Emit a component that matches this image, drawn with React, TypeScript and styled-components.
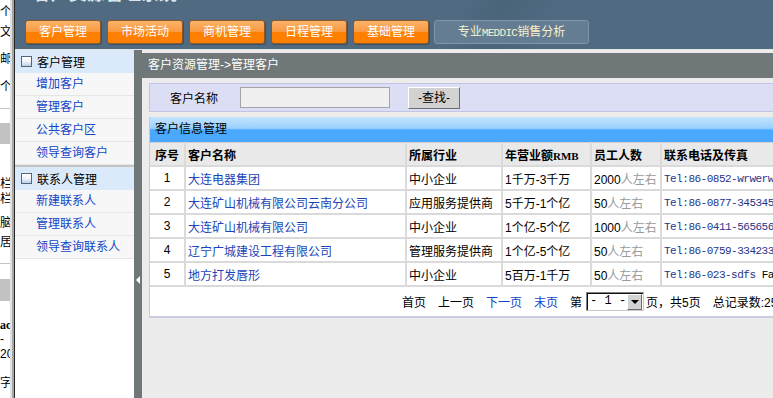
import React from "react";
import styled, { createGlobalStyle } from "styled-components";

const GlobalStyle = createGlobalStyle`
  html, body {
    margin: 0;
    padding: 0;
    background: #ffffff;
  }
  body {
    font-family: "Liberation Sans", "Noto Sans CJK SC", sans-serif;
    font-size: 12px;
    color: #000;
    overflow: hidden;
  }
`;

const Page = styled.div`
  display: flex;
  width: 773px;
  height: 398px;
  overflow: hidden;
`;

/* ---------- cut-off frame on the far left ---------- */

const LeftStrip = styled.div`
  width: 10px;
  flex-shrink: 0;
  display: flex;
  flex-direction: column;
  background: #fff;
  overflow: hidden;
`;

const StripRow = styled.div<{ $h: number; $bold?: boolean }>`
  height: ${(p) => p.$h}px;
  line-height: ${(p) => p.$h}px;
  flex-shrink: 0;
  white-space: nowrap;
  font-size: 12px;
  font-family: ${(p) =>
    p.$bold ? `"Liberation Serif", serif` : `"Liberation Sans", "Noto Sans CJK SC", sans-serif`};
  font-weight: ${(p) => (p.$bold ? 700 : 400)};
`;

const StripLine = styled.div`
  height: 1px;
  flex-shrink: 0;
  background: #c4c4c4;
`;

const StripBlock = styled.div<{ $h: number }>`
  height: ${(p) => p.$h}px;
  flex-shrink: 0;
  background: #c2c2c2;
`;

const StripEdge = styled.div`
  width: 5px;
  flex-shrink: 0;
  background: linear-gradient(
    to right,
    #e2e2e2 0 2px,
    #a6a6a6 2px 4px,
    #262626 4px 5px
  );
`;

/* ---------- application frame ---------- */

const AppFrame = styled.div`
  flex: 1;
  display: flex;
  flex-direction: column;
  min-width: 0;
`;

const Header = styled.div`
  height: 49px;
  flex-shrink: 0;
  background: linear-gradient(
    112deg,
    #4f6a81 0%,
    #4f6a81 58%,
    #4a6479 63%,
    #4f6a81 70%,
    #4f6a81 100%
  );
  overflow: hidden;
`;

const TitleClip = styled.div`
  height: 20px;
  overflow: hidden;
  padding-left: 18px;
`;

const TitleText = styled.div`
  margin-top: -18px;
  font-family: "Liberation Sans", "Noto Sans CJK SC", sans-serif;
  font-size: 18px;
  line-height: 24px;
  font-weight: 700;
  color: #dbe4ec;
  white-space: nowrap;
`;

const NavRow = styled.div`
  display: flex;
  gap: 6px;
  padding-left: 10px;
`;

const NavButton = styled.div`
  width: 76px;
  height: 24px;
  box-sizing: border-box;
  border: 1px solid #8a5a2c;
  border-radius: 3px;
  box-shadow: 1px 1px 0 #3c5264;
  background: linear-gradient(
    #fcb36a 0%,
    #f89a42 48%,
    #ff8000 52%,
    #ff8000 100%
  );
  color: #ffffff;
  font-size: 12px;
  line-height: 22px;
  text-align: center;
  white-space: nowrap;
`;

const SpecialNav = styled.div`
  margin-left: -1px;
  width: 155px;
  height: 24px;
  box-sizing: border-box;
  border: 1px solid #8196a8;
  border-radius: 3px;
  background: #657d92;
  color: #f7f2cc;
  font-size: 12px;
  line-height: 22px;
  text-align: center;
  white-space: nowrap;
`;

const MonoBit = styled.span`
  font-family: "Liberation Mono", monospace;
  font-size: 11px;
  letter-spacing: -0.7px;
`;

const HeaderRule = styled.div`
  height: 1px;
  flex-shrink: 0;
  background: #e4e4e4;
`;

const Body = styled.div`
  flex: 1;
  display: flex;
  min-height: 0;
`;

/* ---------- sidebar ---------- */

const Sidebar = styled.div`
  width: 119px;
  flex-shrink: 0;
  background: #ffffff;
  display: flex;
  flex-direction: column;
`;

const SideHead = styled.div<{ $first?: boolean }>`
  height: 23px;
  display: flex;
  align-items: center;
  gap: 5px;
  padding-left: 6px;
  background: #dbeafa;
  border-top: ${(p) => (p.$first ? "0" : "2px solid #c4c4c4")};
  font-size: 12px;
  color: #000;
`;

const SideIcon = styled.span`
  width: 9px;
  height: 9px;
  border: 1px solid #56657a;
  background: linear-gradient(#ffffff 0%, #f0f4fa 50%, #b9cfe9 100%);
`;

const SideItem = styled.div`
  height: 22px;
  line-height: 22px;
  padding-left: 21px;
  background: #f7f7f7;
  border-bottom: 1px solid #e6e6e6;
  color: #1046c8;
  font-size: 12px;
  white-space: nowrap;
`;

/* ---------- splitter ---------- */

const Splitter = styled.div`
  width: 8px;
  flex-shrink: 0;
  background: #6f7778;
  display: flex;
  flex-direction: column;
  align-items: center;
  padding-top: 226px;
  box-sizing: border-box;
`;

const SplitArrow = styled.span`
  width: 0;
  height: 0;
  border-top: 4px solid transparent;
  border-bottom: 4px solid transparent;
  border-right: 4px solid #ffffff;
`;

/* ---------- main area ---------- */

const Main = styled.div`
  flex: 1;
  min-width: 0;
  background: #ececec;
  overflow: hidden;
  display: flex;
  flex-direction: column;
`;

const CrumbBar = styled.div`
  margin-top: 3px;
  height: 25px;
  line-height: 25px;
  padding-left: 6px;
  background: #6f7778;
  color: #ffffff;
  font-size: 12px;
  white-space: nowrap;
`;

const Content = styled.div`
  padding-left: 7px;
  display: flex;
  flex-direction: column;
`;

const SearchBar = styled.div`
  margin-top: 5px;
  width: 660px;
  height: 29px;
  box-sizing: border-box;
  border: 1px solid #c2c4e6;
  background: #dcdef6;
  display: flex;
  align-items: center;
`;

const SearchLabel = styled.div`
  width: 90px;
  padding-left: 20px;
  box-sizing: border-box;
  font-size: 12px;
  white-space: nowrap;
`;

const SearchInput = styled.div`
  width: 150px;
  height: 21px;
  box-sizing: border-box;
  border: 1px solid #a4a4a4;
  background: #f0f0f0;
`;

const SearchButton = styled.div`
  margin-left: 18px;
  width: 52px;
  height: 22px;
  box-sizing: border-box;
  border: 1px solid #ffffff;
  border-right-color: #6e6e6e;
  border-bottom-color: #6e6e6e;
  background: #d2d2d2;
  font-size: 12px;
  line-height: 20px;
  text-align: center;
  white-space: nowrap;
`;

const Panel = styled.div`
  margin-top: 5px;
  width: 660px;
  border-left: 1px solid #c8ccd8;
  border-bottom: 2px solid #c8cce0;
  background: #ffffff;
`;

const PanelHead = styled.div`
  height: 25px;
  line-height: 24px;
  padding-left: 5px;
  background: linear-gradient(
    #c4e4fe 0%,
    #9ad0fd 45%,
    #4aa9fd 52%,
    #4aa9fd 100%
  );
  font-size: 12px;
  color: #000;
`;

const Grid = styled.table`
  border-collapse: collapse;
  table-layout: fixed;
  width: 660px;
  font-size: 12px;
`;

const HeadCell = styled.th<{ $w: number; $center?: boolean }>`
  width: ${(p) => p.$w}px;
  height: 22px;
  padding: 0 2px;
  background: #e9e9e9;
  border-top: 1px solid #d0d0d0;
  border-right: 2px solid #dadada;
  border-bottom: 2px solid #dadada;
  text-align: ${(p) => (p.$center ? "center" : "left")};
  font-weight: 700;
  white-space: nowrap;
  overflow: hidden;
  font-family: "Liberation Sans", "Noto Sans CJK SC", sans-serif;
`;

const SmallCaps = styled.span`
  font-family: "Liberation Serif", serif;
  font-size: 11px;
  font-weight: 700;
`;

const Cell = styled.td<{ $center?: boolean }>`
  height: 22px;
  padding: 0 2px;
  border-right: 2px solid #dadada;
  border-bottom: 2px solid #dadada;
  text-align: ${(p) => (p.$center ? "center" : "left")};
  white-space: nowrap;
  overflow: hidden;
`;

const NameLink = styled.span`
  color: #1a45b8;
`;

const Muted = styled.span`
  color: #9a9a9a;
`;

const Tel = styled.span`
  font-family: "Liberation Mono", monospace;
  font-size: 11px;
  letter-spacing: -0.5px;
  color: #27338a;
`;

const TelFax = styled.span`
  color: #000;
`;

const Pager = styled.div`
  height: 29px;
  display: flex;
  align-items: center;
  padding-left: 252px;
  font-size: 12px;
  white-space: nowrap;
`;

const PagerLink = styled.span<{ $active?: boolean }>`
  margin-right: 12px;
  color: ${(p) => (p.$active ? "#1046c8" : "#000")};
`;

const PagerText = styled.span`
  margin-right: 4px;
`;

const PageSelect = styled.div`
  width: 58px;
  height: 19px;
  box-sizing: border-box;
  border: 1px solid #808080;
  border-right-color: #c8c8c8;
  border-bottom-color: #c8c8c8;
  box-shadow: inset 1px 1px 0 #111;
  background: #ffffff;
  display: flex;
  align-items: stretch;
  margin-right: 2px;
`;

const SelectValue = styled.span`
  flex: 1;
  font-family: "Liberation Mono", monospace;
  font-size: 12px;
  line-height: 17px;
  padding-left: 3px;
  white-space: pre;
`;

const SelectArrow = styled.span`
  width: 15px;
  margin: 1px 1px 0 0;
  background: #d2d2d2;
  border: 1px solid #ffffff;
  border-right-color: #6e6e6e;
  border-bottom-color: #6e6e6e;
  box-sizing: border-box;
  display: flex;
  align-items: center;
  justify-content: center;

  &::after {
    content: "";
    width: 0;
    height: 0;
    border-left: 4px solid transparent;
    border-right: 4px solid transparent;
    border-top: 4px solid #000;
  }
`;

const navItems = ["客户管理", "市场活动", "商机管理", "日程管理", "基础管理"];

const customerLinks = ["增加客户", "管理客户", "公共客户区", "领导查询客户"];
const contactLinks = ["新建联系人", "管理联系人", "领导查询联系人"];

const rows = [
  { no: 1, name: "大连电器集团", trade: "中小企业", revenue: "1千万-3千万", staff: "2000", tel: "Tel:86-0852-wrwerwe" },
  { no: 2, name: "大连矿山机械有限公司云南分公司", trade: "应用服务提供商", revenue: "5千万-1个亿", staff: "50", tel: "Tel:86-0877-34534534" },
  { no: 3, name: "大连矿山机械有限公司", trade: "中小企业", revenue: "1个亿-5个亿", staff: "1000", tel: "Tel:86-0411-56565656" },
  { no: 4, name: "辽宁广城建设工程有限公司", trade: "管理服务提供商", revenue: "1个亿-5个亿", staff: "50", tel: "Tel:86-0759-33423344" },
  { no: 5, name: "地方打发唇形", trade: "中小企业", revenue: "5百万-1千万", staff: "50", tel: "Tel:86-023-sdfs", fax: " Fax" },
];

const LeftFrame = () => (
  <LeftStrip>
    <StripRow $h={24}>个</StripRow>
    <StripRow $h={16}>文</StripRow>
    <StripRow $h={38}>邮</StripRow>
    <StripRow $h={18}>个</StripRow>
    <StripRow $h={12} />
    <StripLine />
    <StripRow $h={14} />
    <StripBlock $h={21} />
    <StripRow $h={32} />
    <StripRow $h={16}>栏</StripRow>
    <StripRow $h={15}>栏</StripRow>
    <StripRow $h={8} />
    <StripRow $h={16}>脑</StripRow>
    <StripRow $h={3} />
    <StripRow $h={16}>居</StripRow>
    <StripRow $h={13} />
    <StripLine />
    <StripRow $h={15} />
    <StripBlock $h={22} />
    <StripRow $h={16} />
    <StripRow $h={16} $bold>
      ac
    </StripRow>
    <StripRow $h={12}>-</StripRow>
    <StripRow $h={18}>20</StripRow>
    <StripRow $h={12} />
    <StripRow $h={16}>字</StripRow>
  </LeftStrip>
);

export default function App() {
  return (
    <>
      <GlobalStyle />
      <Page>
        <LeftFrame />
        <StripEdge />
        <AppFrame>
          <Header>
            <TitleClip>
              <TitleText>客户资源管理系统 V1.1</TitleText>
            </TitleClip>
            <NavRow>
              {navItems.map((n) => (
                <NavButton key={n}>{n}</NavButton>
              ))}
              <SpecialNav>
                专业<MonoBit>MEDDIC</MonoBit>销售分析
              </SpecialNav>
            </NavRow>
          </Header>
          <HeaderRule />
          <Body>
            <Sidebar>
              <SideHead $first>
                <SideIcon />
                客户管理
              </SideHead>
              {customerLinks.map((l) => (
                <SideItem key={l}>{l}</SideItem>
              ))}
              <SideHead>
                <SideIcon />
                联系人管理
              </SideHead>
              {contactLinks.map((l) => (
                <SideItem key={l}>{l}</SideItem>
              ))}
            </Sidebar>
            <Splitter>
              <SplitArrow />
            </Splitter>
            <Main>
              <CrumbBar>客户资源管理-&gt;管理客户</CrumbBar>
              <Content>
                <SearchBar>
                  <SearchLabel>客户名称</SearchLabel>
                  <SearchInput />
                  <SearchButton>-查找-</SearchButton>
                </SearchBar>
                <Panel>
                  <PanelHead>客户信息管理</PanelHead>
                  <Grid>
                    <thead>
                      <tr>
                        <HeadCell $w={30} $center>
                          序号
                        </HeadCell>
                        <HeadCell $w={215}>客户名称</HeadCell>
                        <HeadCell $w={90}>所属行业</HeadCell>
                        <HeadCell $w={83}>
                          年营业额<SmallCaps>RMB</SmallCaps>
                        </HeadCell>
                        <HeadCell $w={64}>员工人数</HeadCell>
                        <HeadCell $w={170}>联系电话及传真</HeadCell>
                      </tr>
                    </thead>
                    <tbody>
                      {rows.map((r) => (
                        <tr key={r.no}>
                          <Cell $center>{r.no}</Cell>
                          <Cell>
                            <NameLink>{r.name}</NameLink>
                          </Cell>
                          <Cell>{r.trade}</Cell>
                          <Cell>{r.revenue}</Cell>
                          <Cell>
                            {r.staff}
                            <Muted>人左右</Muted>
                          </Cell>
                          <Cell>
                            <Tel>
                              {r.tel}
                              {r.fax && <TelFax>{r.fax}</TelFax>}
                            </Tel>
                          </Cell>
                        </tr>
                      ))}
                    </tbody>
                  </Grid>
                  <Pager>
                    <PagerLink>首页</PagerLink>
                    <PagerLink>上一页</PagerLink>
                    <PagerLink $active>下一页</PagerLink>
                    <PagerLink $active>末页</PagerLink>
                    <PagerText>第</PagerText>
                    <PageSelect>
                      <SelectValue>- 1 -</SelectValue>
                      <SelectArrow />
                    </PageSelect>
                    <PagerLink>页，共5页</PagerLink>
                    <PagerText>总记录数:25</PagerText>
                  </Pager>
                </Panel>
              </Content>
            </Main>
          </Body>
        </AppFrame>
      </Page>
    </>
  );
}
